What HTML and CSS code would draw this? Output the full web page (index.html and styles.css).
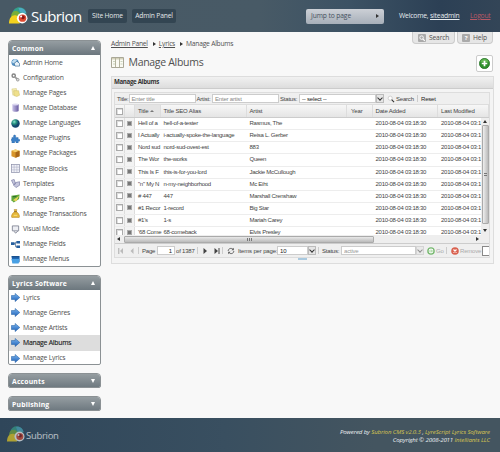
FILE: index.html
```html
<!DOCTYPE html>
<html lang="en">
<head>
<meta charset="utf-8">
<title>Manage Albums</title>
<link rel="stylesheet" href="styles.css">
</head>
<body>
<svg class="defs" width="0" height="0">
  <defs>
    <radialGradient id="g-globe" cx=".35" cy=".3"><stop offset="0" stop-color="#8fe0d0"/><stop offset=".5" stop-color="#26957f"/><stop offset="1" stop-color="#14476e"/></radialGradient>
    <linearGradient id="g-arrow" x2="0" y2="1"><stop offset="0" stop-color="#7db8f0"/><stop offset="1" stop-color="#1d5fb8"/></linearGradient>
    <linearGradient id="g-db"><stop offset="0" stop-color="#c9c2e8"/><stop offset="1" stop-color="#675aa0"/></linearGradient>
    <symbol id="logo" viewBox="0 0 18 16">
      <path d="M3 6C4 2 7 0 10 .2c4 .3 6 3 6.500 6L10 8z" fill="#35a08b"/>
      <path d="M9 1c4-1 7 2 7.500 5l-6-1z" fill="#4cabc2"/>
      <path d="M2 9C2 5 5 3 8 4c2 1 3 3 3 5l-4 4z" fill="#79ad39"/>
      <path d="M0 15.500C0 10 3 7 7 8c3 1 4 4 3 7.500z" fill="#f2d21e"/>
      <circle cx="12.500" cy="10.500" r="5" fill="#fff"/><circle cx="12.800" cy="10.500" r="3.500" fill="#df4b32"/><circle cx="13.200" cy="9.800" r="1.700" fill="#8b1616"/><circle cx="11.500" cy="8.900" r="1" fill="#fff"/>
    </symbol>
    <symbol id="home" viewBox="0 0 10 10"><circle cx="4.500" cy="5" r="4" fill="#4d8cc0"/><path d="M1 4 4 1l3 1-2 3-3 1z" fill="#bedcf0"/><path d="M3.500 6 6.500 3.500 9.500 6v3h-5z" fill="#e9f2f8" stroke="#2f6593" stroke-width=".7"/></symbol>
    <symbol id="config" viewBox="0 0 10 10"><circle cx="3" cy="3" r="1.800" fill="none" stroke="#858585" stroke-width="1.600"/><path d="m4 4 4 4" stroke="#9b9b9b" stroke-width="2"/><circle cx="7.500" cy="7.500" r="1.500" fill="#ddd" stroke="#888" stroke-width=".8"/></symbol>
    <symbol id="pages" viewBox="0 0 10 10"><path d="m1 1 5-.5 1 6.500-5 1z" fill="#f4ebae" stroke="#cfc27b" stroke-width=".5"/><path d="m3 3 5.500 0 1 5-3 1.500-3-1z" fill="#efe08c" stroke="#c7b765" stroke-width=".5"/></symbol>
    <symbol id="database" viewBox="0 0 10 10"><path d="M1.500 1.500v7c0 1.500 7 1.500 7 0v-7z" fill="url(#g-db)"/><ellipse cx="5" cy="1.700" rx="3.500" ry="1.200" fill="#dcd8f0"/></symbol>
    <symbol id="globe" viewBox="0 0 10 10"><circle cx="5" cy="5" r="4.700" fill="url(#g-globe)"/></symbol>
    <symbol id="plugin" viewBox="0 0 10 10"><path d="M1 4h2c-1.500-4 3.500-4 2 0h3v2c2.500-1 2.500 3 0 2v2H5.500C6 7.500 3.500 7.500 4 10H1V7.500c-1.500 0-1.500-2 0-1.500z" fill="#3c80c8" stroke="#28619f" stroke-width=".4"/></symbol>
    <symbol id="package" viewBox="0 0 10 10"><path d="m.5 2 4.500-1.500L9.500 2v6L5 9.800.5 8z" fill="#d8962b"/><path d="m.5 2 4.500 1.500L9.500 2 5 .5z" fill="#f4d06e"/><path d="M5 3.500V9.800L9.500 8V2z" fill="#a96717"/></symbol>
    <symbol id="blocks" viewBox="0 0 10 10"><rect x=".5" y=".5" width="9" height="9" fill="#f1f1f8" stroke="#8d90aa" stroke-width=".8"/><path d="M3.500 1v8M6.500 1v8M1 3.500h8M1 6.500h8" stroke="#aaadc2" stroke-width=".6"/></symbol>
    <symbol id="templates" viewBox="0 0 10 10"><path d="m.5 1.500 3-1 1.500 5-2 1zM5 4l4.500-1v4L5.500 9.500 3 7z" fill="#c5c6dd" stroke="#8083a9" stroke-width=".8"/></symbol>
    <symbol id="plans" viewBox="0 0 10 10"><path d="m.5 2 9-1.500-.5 5-6 4L.5 7z" fill="#61a83d"/><path d="m2 7 7-5-3 6z" fill="#e7d357"/><path d="M2 3h4" stroke="#235e25"/></symbol>
    <symbol id="money" viewBox="0 0 10 10"><path d="M3.500.5h3L6 3c3.500 2 4 6 3 6.500H1C0 9 .5 5 4 3z" fill="#e4b638" stroke="#ac7b1d" stroke-width=".5"/><path d="M3.500 3h3" stroke="#896020"/><path d="M3 7h4" stroke="#fae58c"/></symbol>
    <symbol id="visual" viewBox="0 0 10 10"><path d="M1.500 1h7v5.500h-7z" fill="#edeef3" stroke="#777c8c" stroke-width=".9"/><path d="m3.500 7 1.500 2 2.500-2" fill="none" stroke="#777c8c"/></symbol>
    <symbol id="fields" viewBox="0 0 10 10"><path d="M3 4h2V2.500h2M5 4v3.500h2" fill="none" stroke="#45658a" stroke-width=".8"/><path d="M0 2.500h4v3H0zM6 1h4v3H6zM6 6h4v3H6z" fill="#265f9e"/></symbol>
    <symbol id="menus" viewBox="0 0 10 10"><path d="M.5 1h9v7h-8z" fill="#2068b5"/><path d="M.5 4.500h9L8.500 9.500h-7z" fill="#48a0e4"/><path d="M1 2h8" stroke="#174579"/></symbol>
    <symbol id="arrow" viewBox="0 0 10 10"><path d="M.4 2.800h4.200V.5L9.800 5 4.600 9.500V7.200H.4z" fill="url(#g-arrow)" stroke="#2560a3" stroke-width=".6"/></symbol>
    <symbol id="lens" viewBox="0 0 10 10"><circle cx="4" cy="4" r="2.600" fill="#fff" stroke="#bbb" stroke-width=".8"/><path d="m5.800 5.800 3 3" stroke="#333" stroke-width="1.400"/></symbol>
    <symbol id="lens-light" viewBox="0 0 10 10"><circle cx="4.500" cy="4.500" r="2.200" fill="none" stroke="#fff" stroke-width="1.100"/><path d="m6 6 2.500 2.500" stroke="#fff" stroke-width="1.400"/></symbol>
    <symbol id="refresh" viewBox="0 0 10 10"><path d="M1.500 5C1.500 1.500 6 .8 7.500 3M8.500 5C8.500 8.500 4 9.200 2.500 7" fill="none" stroke="#555" stroke-width="1.100"/><path d="M8.500 1v3h-3zM1.500 9V6h3z" fill="#555"/></symbol>
  </defs>
</svg>

<header class="top">
  <svg class="logo"><use href="#logo"/></svg>
  <span class="brand">Subrion</span>
  <a class="nav nav-home">Site Home</a>
  <a class="nav nav-admin">Admin Panel</a>
  <div class="jump"><span>Jump to page</span><i class="tri-r"></i></div>
  <div class="welcome">Welcome, <u>siteadmin</u></div>
  <a class="logout">Logout</a>
</header>

<div class="body">
  <nav class="side">
    <section class="box">
      <h2>Common<i class="tri-u"></i></h2>
      <ul>
        <li><svg><use href="#home"/></svg>Admin Home</li>
        <li><svg><use href="#config"/></svg>Configuration</li>
        <li><svg><use href="#pages"/></svg>Manage Pages</li>
        <li><svg><use href="#database"/></svg>Manage Database</li>
        <li><svg><use href="#globe"/></svg>Manage Languages</li>
        <li><svg><use href="#plugin"/></svg>Manage Plugins</li>
        <li><svg><use href="#package"/></svg>Manage Packages</li>
        <li><svg><use href="#blocks"/></svg>Manage Blocks</li>
        <li><svg><use href="#templates"/></svg>Templates</li>
        <li><svg><use href="#plans"/></svg>Manage Plans</li>
        <li><svg><use href="#money"/></svg>Manage Transactions</li>
        <li><svg><use href="#visual"/></svg>Visual Mode</li>
        <li><svg><use href="#fields"/></svg>Manage Fields</li>
        <li><svg><use href="#menus"/></svg>Manage Menus</li>
      </ul>
    </section>
    <section class="box">
      <h2>Lyrics Software<i class="tri-u"></i></h2>
      <ul>
        <li><svg><use href="#arrow"/></svg>Lyrics</li>
        <li><svg><use href="#arrow"/></svg>Manage Genres</li>
        <li><svg><use href="#arrow"/></svg>Manage Artists</li>
        <li class="active"><svg><use href="#arrow"/></svg>Manage Albums</li>
        <li><svg><use href="#arrow"/></svg>Manage Lyrics</li>
      </ul>
    </section>
    <section class="box closed"><h2>Accounts<i class="tri-d"></i></h2></section>
    <section class="box closed"><h2>Publishing<i class="tri-d"></i></h2></section>
  </nav>

  <main>
    <div class="crumb-row">
      <div class="crumbs"><u>Admin Panel</u><i class="tri-r"></i><u>Lyrics</u><i class="tri-r"></i><span>Manage Albums</span></div>
      <div class="tabs">
        <span class="tab tab-search"><i class="tab-icon"><svg><use href="#lens-light"/></svg></i>Search</span>
        <span class="tab tab-help"><i class="tab-icon">?</i>Help</span>
      </div>
    </div>
    <div class="title-row">
      <svg class="title-icon" viewBox="0 0 13 11"><path d="M.5.500h12v10H.5z" fill="#fbfbf4" stroke="#aaa897"/><path d="M1 1h11v1.500H1z" fill="#d5d2ba"/><path d="M4.500 1v9M8.500 1v9" stroke="#b5b49f"/><path d="M2 4.500h2M2 7h2M9.500 4.500h2M9.500 7h2" stroke="#c9d3bd"/></svg>
      <h1>Manage Albums</h1>
      <span class="add"><svg viewBox="0 0 12 12"><circle cx="6" cy="6" r="5.600" fill="#2f8f2c" stroke="#226c22" stroke-width=".7"/><path d="M1.500 4.500a4.700 4.700 0 0 1 9 0z" fill="#62b552"/><path d="M6 3v6M3 6h6" stroke="#fff" stroke-width="1.900"/></svg></span>
    </div>

    <div class="panel">
      <h3>Manage Albums</h3>
      <div class="inner">
        <div class="filters">
          <label>Title:</label><span class="input wide">Enter title</span>
          <label class="l-artist">Artist:</label><span class="input wide">Enter artist</span>
          <label class="l-status">Status:</label><span class="input select">-- select --</span><i class="drop"></i>
          <svg class="find"><use href="#lens"/></svg><span class="t-search">Search</span><span class="sep"></span><span class="t-reset">Reset</span>
        </div>
        <div class="row head"><span><i class="check"></i></span><span></span><span class="sorted">Title <i class="sort"></i></span><span>Title SEO Alias</span><span>Artist</span><span>Year</span><span>Date Added</span><span>Last Modified</span></div>
        <div class="grid">
          <div class="rows">
            <div class="row"><span><i class="check"></i></span><span><i class="edit"></i></span><span>Hell of a</span><span>hell-of-a-tester</span><span>Rasmus, The</span><span></span><span>2010-08-04 03:18:30</span><span>2010-08-04 03:1</span></div>
            <div class="row"><span><i class="check"></i></span><span><i class="edit"></i></span><span>I Actually</span><span>i-actually-spoke-the-language</span><span>Reisa L. Gerber</span><span></span><span>2010-08-04 03:18:30</span><span>2010-08-04 03:1</span></div>
            <div class="row"><span><i class="check"></i></span><span><i class="edit"></i></span><span>Nord sud</span><span>nord-sud-ovest-est</span><span>883</span><span></span><span>2010-08-04 03:18:30</span><span>2010-08-04 03:1</span></div>
            <div class="row"><span><i class="check"></i></span><span><i class="edit"></i></span><span>The Wor</span><span>the-works</span><span>Queen</span><span></span><span>2010-08-04 03:18:30</span><span>2010-08-04 03:1</span></div>
            <div class="row"><span><i class="check"></i></span><span><i class="edit"></i></span><span>This Is F</span><span>this-is-for-you-lord</span><span>Jackie McCullough</span><span></span><span>2010-08-04 03:18:30</span><span>2010-08-04 03:1</span></div>
            <div class="row"><span><i class="check"></i></span><span><i class="edit"></i></span><span>"n" My N</span><span>n-my-neighborhood</span><span>Mc Eiht</span><span></span><span>2010-08-04 03:18:30</span><span>2010-08-04 03:1</span></div>
            <div class="row"><span><i class="check"></i></span><span><i class="edit"></i></span><span># 447</span><span>447</span><span>Marshall Crenshaw</span><span></span><span>2010-08-04 03:18:30</span><span>2010-08-04 03:1</span></div>
            <div class="row"><span><i class="check"></i></span><span><i class="edit"></i></span><span>#1 Recor</span><span>1-record</span><span>Big Star</span><span></span><span>2010-08-04 03:18:30</span><span>2010-08-04 03:1</span></div>
            <div class="row"><span><i class="check"></i></span><span><i class="edit"></i></span><span>#1's</span><span>1-s</span><span>Mariah Carey</span><span></span><span>2010-08-04 03:18:30</span><span>2010-08-04 03:1</span></div>
            <div class="row"><span><i class="check"></i></span><span><i class="edit"></i></span><span>'68 Come</span><span>68-comeback</span><span>Elvis Presley</span><span></span><span>2010-08-04 03:18:30</span><span>2010-08-04 03:1</span></div>
          </div>
          <div class="vscroll"><i class="tri-u"></i><span class="thumb"><i class="grip"></i></span><i class="tri-d"></i></div>
        </div>
        <div class="hscroll"><i class="tri-l"></i><span class="thumb"><i class="grip"></i></span><i class="tri-r"></i></div>
        <div class="paging">
          <svg class="pg first" viewBox="0 0 6 6"><path d="M.8 0v6" stroke="#aaa"/><path d="M5 0v6L2 3z" fill="#bbb"/></svg>
          <svg class="pg prev" viewBox="0 0 6 6"><path d="M4.500 0v6l-3-3z" fill="#bbb"/></svg>
          <span class="sep"></span><span class="t-page">Page</span><span class="input page">1</span><span class="t-of">of 1387</span><span class="sep"></span>
          <svg class="pg next" viewBox="0 0 6 6"><path d="M.5 0v6l3.500-3z" fill="#444"/></svg>
          <svg class="pg last" viewBox="0 0 6 6"><path d="M.5 0v6l3.500-3z" fill="#444"/><path d="M5 0v6" stroke="#444"/></svg>
          <span class="sep"></span><svg class="refresh"><use href="#refresh"/></svg><span class="t-items">Items per page:</span><span class="input count">10</span><i class="drop"></i>
          <span class="sep"></span><span class="t-status">Status:</span><span class="input state">active</span><i class="drop faded"></i>
          <svg class="act go" viewBox="0 0 8 8"><circle cx="4" cy="4" r="3.100" fill="#fff" stroke="#78b971" stroke-width="1.400"/><path d="M2 4h3M4 2.500 5.500 4 4 5.500" fill="none" stroke="#8bc783" stroke-width=".8"/></svg><span class="dim t-go">Go</span><span class="sep"></span>
          <svg class="act" viewBox="0 0 8 8"><circle cx="4" cy="4" r="3.800" fill="#d9614f"/><path d="m2.500 2.500 3 3m0-3-3 3" stroke="#fff" stroke-width="1.200"/></svg><span class="dim t-remove">Remove</span><span class="edge"></span>
        </div>
      </div>
      <span class="handle"></span>
    </div>
  </main>
</div>

<footer>
  <svg class="logo"><use href="#logo"/></svg><span class="brand">Subrion</span>
  <div class="copy"><p class="c1">Powered by <b>Subrion CMS v2.0.3</b> , <b>LyreScript Lyrics Software</b></p><p class="c2">Copyright © 2008-2011 <b>Intelliants LLC</b></p></div>
</footer>
</body>
</html>
```
FILE: styles.css
```css
* { box-sizing: border-box; }
body { margin: 0; width: 500px; height: 452px; overflow: hidden; display: flex; flex-direction: column; background: #f8f8f8; color: #505050; font: 500 7px/10px "Open Sans", "Noto Sans", sans-serif; }
h1, h2, h3, ul, p { margin: 0; padding: 0; list-style: none; }
svg, i { display: block; flex: none; }
span { white-space: nowrap; }
.defs { position: absolute; }
.tri-r, .tri-l, .tri-u, .tri-d { width: 0; height: 0; border: 2px solid transparent; }
.tri-r { border-left: 3px solid #333; border-right: 0; }
.tri-l { border-right: 3px solid #333; border-left: 0; }
.tri-u { border-bottom: 4px solid #fff; border-top: 0; }
.tri-d { border-top: 4px solid #fff; border-bottom: 0; }

.top { flex: none; height: 32px; display: flex; align-items: center; padding-left: 9px; background: linear-gradient(90deg, #485965 0, #485a66 52%, #3c5264 70%, #2c4055 88%, #334557 100%); }
.top .logo { width: 19px; height: 17px; margin-top: -2px; }
.brand { color: #fff; font: 500 15px/16px "Open Sans", sans-serif; }
.top .brand { width: 60px; margin-left: 3px; letter-spacing: -.6px; margin-top: -1px; }
.nav { height: 14px; border-radius: 2px; background: #334552; color: #e3e7ea; font-size: 6.7px; line-height: 14px; text-align: center; white-space: nowrap; letter-spacing: -.15px; }
.nav-home { width: 39px; margin-left: -3px; }
.nav-admin { width: 44px; margin-left: 5px; }
.jump { width: 78px; height: 15px; margin-left: 130px; padding: 0 6px 0 5px; display: flex; align-items: center; justify-content: space-between; border-radius: 2px; background: linear-gradient(#ccd0d6, #a7afb9); color: #45505c; font-size: 6.7px; letter-spacing: -.1px; }
.jump .tri-r { margin-right: -1px; }
.welcome { width: 61px; margin-left: 15px; color: #e8edf0; font-size: 6.8px; white-space: nowrap; letter-spacing: -.2px; }
.logout { margin-left: 10px; color: #b75966; font-size: 6.8px; text-decoration: underline; letter-spacing: -.25px; }

.body { height: 386px; flex: none; display: flex; }
.side { width: 93px; margin: 8px 0 0 8px; flex: none; }
.box { height: 227px; margin-bottom: 8px; background: #fff; border: 1px solid #8b9194; border-radius: 4px 4px 2px 2px; overflow: hidden; }
.box + .box { height: 90px; }
.box.closed, .box + .box.closed { height: 15px; }
.box h2 { height: 14px; display: flex; align-items: center; justify-content: space-between; padding: 0 5px 0 3px; background: linear-gradient(#959da1, #6c777e); color: #fff; font: bold 6.8px/13px "Open Sans", sans-serif; letter-spacing: .2px; }
.box li { height: 15.15px; display: flex; align-items: center; padding-left: 2px; gap: 3px; white-space: nowrap; font-size: 6.8px; letter-spacing: -.21px; }
.box li svg { width: 9px; height: 9px; }
.box li.active { background: #ddd; color: #222; -webkit-text-stroke: .15px #222; }

main { width: 383px; margin-left: 10px; }
.crumb-row { display: flex; justify-content: space-between; height: 20px; }
.crumbs { display: flex; align-items: center; height: 10px; margin-top: 7px; font-size: 6.7px; letter-spacing: -.23px; }
.crumbs .tri-r { margin: 0 3px 0 5px; }
.tabs { display: flex; gap: 2px; margin-right: 1px; }
.tab { display: flex; align-items: center; height: 12px; padding-left: 5px; border: 1px solid #ccc; border-top: 0; border-radius: 0 0 4px 4px; background: #e6e6e6; font-size: 6.7px; gap: 3px; letter-spacing: -.15px; }
.tab-search { width: 43px; }
.tab-help { width: 36px; padding-left: 4px; }
.tab-icon { width: 8px; height: 8px; border-radius: 1px; background: #aaa; color: #fff; font: bold 6px/8px "Open Sans", sans-serif; text-align: center; }
.tab-icon svg { width: 8px; height: 8px; }
.title-row { height: 24px; display: flex; align-items: center; padding-right: 1px; }
.title-icon { width: 13px; height: 11px; margin-top: -3px; }
h1 { font: 500 10.5px/14px "Open Sans", sans-serif; color: #505050; margin: -4px auto 0 4.5px; letter-spacing: -.3px; }
.add { width: 17px; height: 17px; padding: 2px; margin-top: -1px; border: 1px solid #ccc; border-radius: 2px; background: #fff; }
.add svg { width: 11px; height: 11px; }

.panel { height: 188px; border: 1px solid #ddd; background: #f4f4f4; font: 6px/8px "Liberation Sans", sans-serif; color: #444; letter-spacing: -.2px; }
.panel h3 { height: 12px; padding-left: 2px; border-bottom: 1px solid #ccc; background: linear-gradient(#f1f1f1, #ddd); color: #333; font: bold 6.2px/10px "Open Sans", sans-serif; letter-spacing: -.35px; }
.inner { width: 376px; height: 166px; margin: 3px 0 0 2px; border: 1px solid #ddd; overflow: hidden; background: #fff; }
.filters, .paging { display: flex; align-items: center; background: #efefef; }
.filters > *, .paging > * { flex: none; white-space: nowrap; }
.filters { height: 12px; padding-left: 2px; border-bottom: 1px solid #ddd; }
.filters label { width: 11.5px; }
.filters .l-artist { width: 16.5px; padding-left: 1px; }
.filters .l-status { width: 20px; padding-left: 1px; }
.input { height: 9px; padding-left: 2px; border: 1px solid #ccc; background: #fff; line-height: 8px; color: #222; }
.input.wide { width: 67px; color: #888; }
.input.select { width: 77px; }
.drop { width: 8px; height: 9px; border: 1px solid #bbb; background: #e5e5e5; display: flex; align-items: center; justify-content: center; }
.drop::before { content: ""; width: 3px; height: 3px; margin-top: -2px; border: solid #333; border-width: 0 1px 1px 0; transform: rotate(45deg); }
.drop.faded { opacity: .5; }
.find { width: 8px; height: 8px; margin: 0 1px 0 3px; }
.t-search { width: 18px; }
.t-reset { color: #222; }
.sep { width: 1px; height: 7px; margin: 0 3px; background: #ccc; }
.row { display: grid; grid-template-columns: 10px 10px 25.5px 86px 100.5px 25.5px 65.5px 51px; height: 12.13px; border-bottom: 1px solid #ededed; letter-spacing: -.27px; }
.row > span { padding-left: 3px; line-height: 10px; }
.row > span:nth-child(6) { padding-left: 4px; }
.row > span:nth-child(-n+2) { background: #f3f3f3; border-right: 1px solid #ddd; padding: 1.500px 0 0 1px; }
.row.head { height: 13px; background: linear-gradient(#f7f7f7, #e5e5e5); border-bottom: 1px solid #ccc; letter-spacing: -.15px; }
.row.head > span { border-right: 1px solid #ddd; background: none; line-height: 12px; }
.row.head > span:nth-child(-n+2) { padding-top: 2.500px; }
.row.head > .sorted { display: flex; align-items: center; background: #e4e4e4; gap: 2px; }
.sort { width: 0; height: 0; border: 2px solid transparent; border-top: 0; border-bottom: 2px solid #777; }
.check { width: 7px; height: 7px; border: 1px solid #aaa; background: #fff; box-shadow: inset 1px 1px #ddd; }
.edit { width: 5px; height: 5px; border: 1px solid #aaa; background: #777; margin: 1px 0 0 1px; }
.grid { height: 117px; display: flex; }
.rows { width: 366px; overflow: hidden; flex: none; }
.vscroll { width: 8px; display: flex; flex-direction: column; align-items: center; background: #eee; padding: 2px 0 3px; }
.vscroll .tri-u { border-bottom: 3px solid #333; }
.vscroll .tri-d { border-top: 3px solid #333; }
.vscroll .thumb { width: 7px; height: 99px; margin: 2px 0 auto; display: flex; align-items: center; justify-content: center; border: 1px solid #aaa; border-radius: 1px; background: linear-gradient(90deg, #eee, #bbb); }
.grip { width: 3px; height: 4px; background: repeating-linear-gradient(#777 0 1px, transparent 1px 2px); }
.hscroll { height: 8px; display: flex; align-items: center; padding: 0 10px 0 2px; background: #eee; }
.hscroll .thumb { width: 250px; height: 7px; margin: 0 auto 0 4px; display: flex; align-items: center; justify-content: center; border: 1px solid #aaa; border-radius: 1px; background: linear-gradient(#e8e8e8, #bbb); }
.hscroll .grip { width: 5px; height: 3px; background: repeating-linear-gradient(90deg, #777 0 1px, transparent 1px 2px); }
.paging { height: 14px; padding-left: 2px; border-top: 1px solid #ccc; }
.paging .sep { margin-left: 2px; }
.pg { width: 6px; height: 6px; }
.pg.first { margin-left: 1px; }
.pg.prev { margin: 0 1px 0 5px; }
.t-page { width: 15px; }
.input.page { width: 18px; padding-right: 2px; text-align: right; }
.t-of { width: 20px; padding-left: 1px; }
.pg.next { margin-left: 2px; }
.pg.last { margin-left: 5px; }
.refresh { width: 8px; height: 8px; margin: 0 3px 0 1px; }
.t-items { width: 39px; letter-spacing: -.15px; }
.input.count { width: 31px; }
.t-status { width: 19px; }
.input.state { width: 75px; color: #999; }
.act { width: 8px; height: 8px; margin: 0 1px; }
.act.go { margin-left: 3px; }
.dim { color: #aaa; }
.t-go { width: 8px; }
.t-remove { width: 21px; }
.edge { width: 7px; height: 10px; margin-left: 1px; border: 1px solid #888; border-right: 0; background: #fff; }
.handle { display: block; width: 9px; height: 2px; margin: 0 auto; background: #a9c9df; }

footer { flex: none; height: 34px; display: flex; align-items: center; padding: 0 10px 0 7px; background: linear-gradient(90deg, #2f465a, #394f60 45%, #445560 75%); }
footer .logo { width: 18px; height: 16px; opacity: .65; margin-top: -3px; }
footer .brand { font-size: 9.5px; opacity: .65; letter-spacing: -.3px; margin-left: 1px; margin-top: 1px; }
.copy { margin-left: auto; text-align: right; color: #edf1f3; font: italic 6.1px/8px "Open Sans", sans-serif; white-space: nowrap; letter-spacing: -.13px; padding-top: 2px; }
.copy b { font-weight: normal; color: #d5c451; }
```
